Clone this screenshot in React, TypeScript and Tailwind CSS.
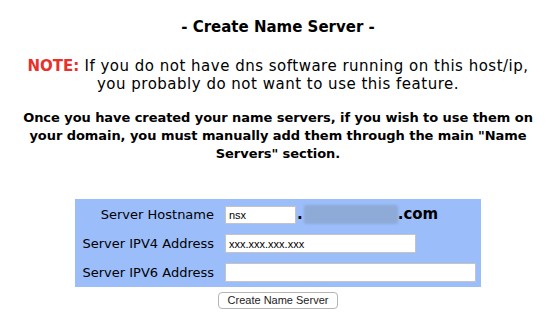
import React from "react";

export default function App() {
  return (
    <div className="w-[556px] h-[328px] bg-white text-black font-['DejaVu_Sans',Verdana,sans-serif] overflow-hidden">
      <h1 className="pt-[18px] text-center text-[15px] leading-[18px] font-bold">- Create Name Server -</h1>
      <p className="mt-[21px] text-center text-[15px] leading-[18px] tracking-[0.5px]">
        <span className="font-bold text-[#e8312a] tracking-normal">NOTE:</span> If you do not have dns software running on this host/ip,
        <br />
        you probably do not want to use this feature.
      </p>
      <p className="mt-[16px] mx-auto w-[520px] text-center text-[13px] leading-[18px] font-bold tracking-[-0.06px]">
        Once you have created your name servers, if you wish to use them on your domain, you must manually add them through the main "Name Servers" section.
      </p>
      <div className="mt-[36px] mx-auto w-[406px] h-[88px] bg-[#9bbdfa] pt-[6px] pl-[6px] flex flex-col gap-[10px]">
        <div className="flex items-center h-[19px]">
          <div className="w-[133px] text-right text-[13px]">Server Hostname</div>
          <input
            readOnly
            value="nsx"
            className="ml-[11px] w-[71px] h-[18px] bg-white border border-[#c4c4c4] px-[3px] text-[11px] font-['Liberation_Sans',Arial,sans-serif] outline-none"
          />
          <span className="ml-[1px] text-[15px] font-bold">.</span>
          <div className="ml-[1px] w-[94px] h-[19px] bg-[#8eaad6] rounded-[2px] blur-[1px]" />
          <span className="text-[15px] font-bold">.com</span>
        </div>
        <div className="flex items-center h-[19px]">
          <div className="w-[133px] text-right text-[13px]">Server IPV4 Address</div>
          <input
            readOnly
            value="xxx.xxx.xxx.xxx"
            className="ml-[11px] w-[191px] h-[19px] bg-white border border-[#c4c4c4] px-[3px] text-[11px] font-['Liberation_Sans',Arial,sans-serif] outline-none"
          />
        </div>
        <div className="flex items-center h-[19px]">
          <div className="w-[133px] text-right text-[13px]">Server IPV6 Address</div>
          <input
            readOnly
            value=""
            className="ml-[11px] w-[251px] h-[19px] bg-white border border-[#c4c4c4] px-[3px] text-[11px] font-['Liberation_Sans',Arial,sans-serif] outline-none"
          />
        </div>
      </div>
      <div className="mt-[5px] flex justify-center">
        <button className="w-[120px] h-[17px] bg-white border border-[#b4b4b4] rounded-[4px] text-[11px] leading-[15px] font-['Liberation_Sans',Arial,sans-serif] text-[#222]">
          Create Name Server
        </button>
      </div>
    </div>
  );
}
